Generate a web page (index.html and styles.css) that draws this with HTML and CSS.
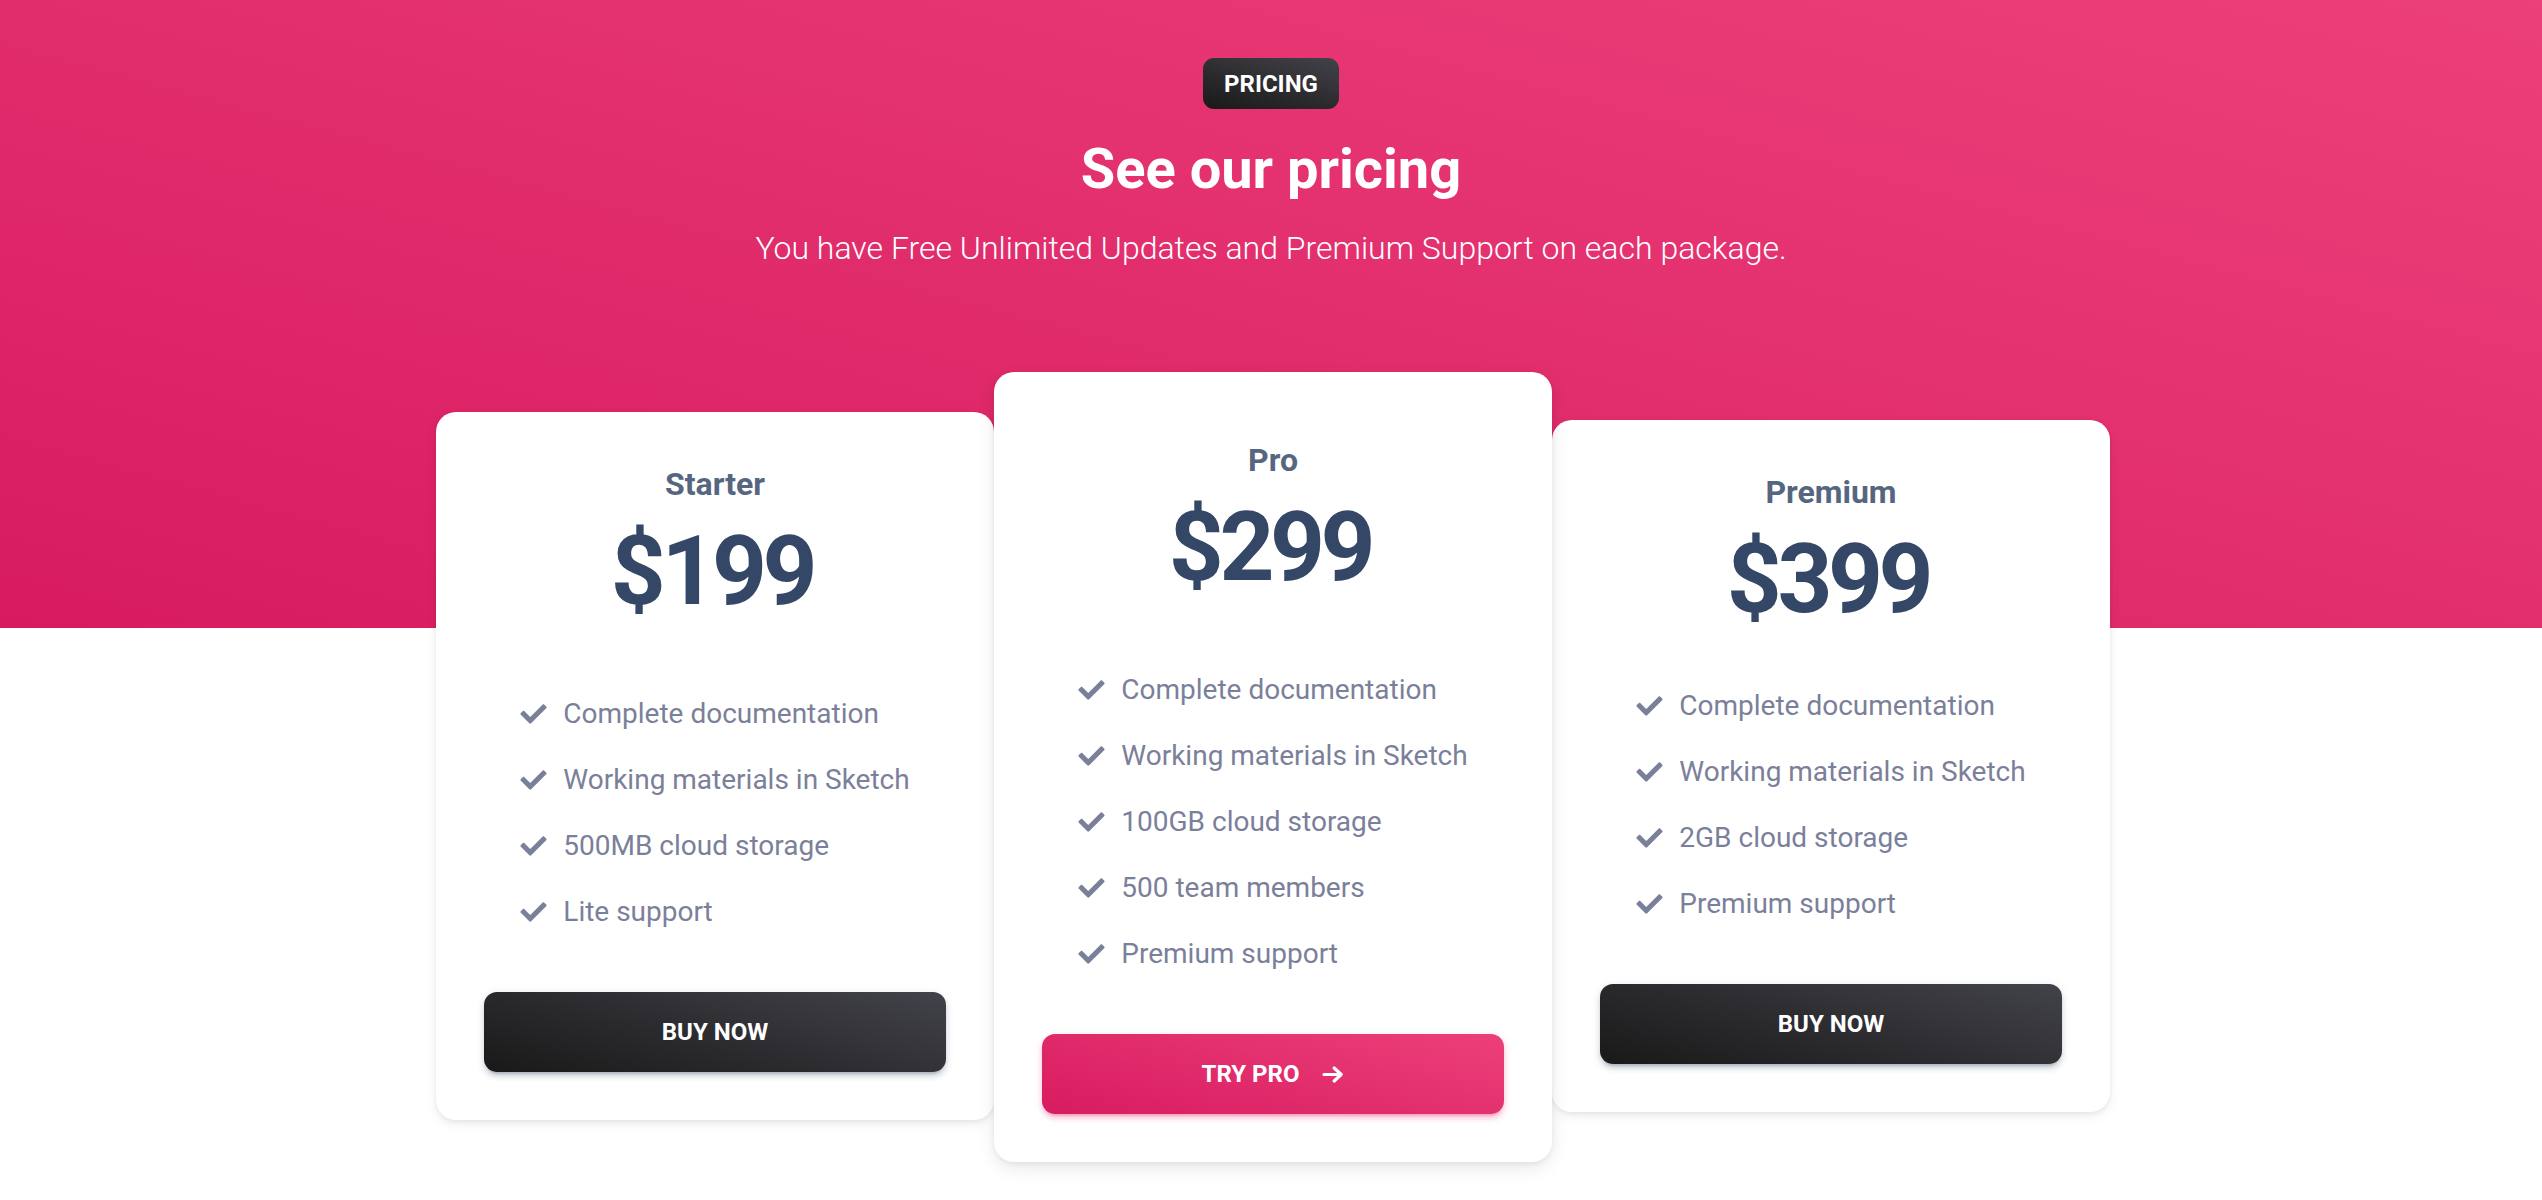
FILE: index.html
```html
<!DOCTYPE html>
<html lang="en">
<head>
<meta charset="utf-8">
<title>Pricing</title>
<link rel="stylesheet" href="styles.css">
</head>
<body>
<section class="pricing">
  <header class="pricing-head">
    <span class="badge">Pricing</span>
    <h2 class="title">See our pricing</h2>
    <p class="lead">You have Free Unlimited Updates and Premium Support on each package.</p>
  </header>

  <div class="plans">
    <article class="plan plan-starter">
      <h3 class="plan-name">Starter</h3>
      <div class="plan-price">$199</div>
      <ul class="features">
        <li><svg class="check" viewBox="0 60 512 392"><path d="M173.898 439.404l-166.4-166.4c-9.997-9.997-9.997-26.206 0-36.204l36.203-36.204c9.997-9.998 26.207-9.998 36.204 0L192 312.69 432.095 72.596c9.997-9.997 26.207-9.997 36.204 0l36.203 36.204c9.997 9.997 9.997 26.206 0 36.204l-294.4 294.401c-9.998 9.997-26.207 9.997-36.204-.001z"/></svg><span>Complete documentation</span></li>
        <li><svg class="check" viewBox="0 60 512 392"><path d="M173.898 439.404l-166.4-166.4c-9.997-9.997-9.997-26.206 0-36.204l36.203-36.204c9.997-9.998 26.207-9.998 36.204 0L192 312.69 432.095 72.596c9.997-9.997 26.207-9.997 36.204 0l36.203 36.204c9.997 9.997 9.997 26.206 0 36.204l-294.4 294.401c-9.998 9.997-26.207 9.997-36.204-.001z"/></svg><span>Working materials in Sketch</span></li>
        <li><svg class="check" viewBox="0 60 512 392"><path d="M173.898 439.404l-166.4-166.4c-9.997-9.997-9.997-26.206 0-36.204l36.203-36.204c9.997-9.998 26.207-9.998 36.204 0L192 312.69 432.095 72.596c9.997-9.997 26.207-9.997 36.204 0l36.203 36.204c9.997 9.997 9.997 26.206 0 36.204l-294.4 294.401c-9.998 9.997-26.207 9.997-36.204-.001z"/></svg><span>500MB cloud storage</span></li>
        <li><svg class="check" viewBox="0 60 512 392"><path d="M173.898 439.404l-166.4-166.4c-9.997-9.997-9.997-26.206 0-36.204l36.203-36.204c9.997-9.998 26.207-9.998 36.204 0L192 312.69 432.095 72.596c9.997-9.997 26.207-9.997 36.204 0l36.203 36.204c9.997 9.997 9.997 26.206 0 36.204l-294.4 294.401c-9.998 9.997-26.207 9.997-36.204-.001z"/></svg><span>Lite support</span></li>
      </ul>
      <a class="btn btn-dark" href="#">Buy now</a>
    </article>

    <article class="plan plan-pro">
      <h3 class="plan-name">Pro</h3>
      <div class="plan-price">$299</div>
      <ul class="features">
        <li><svg class="check" viewBox="0 60 512 392"><path d="M173.898 439.404l-166.4-166.4c-9.997-9.997-9.997-26.206 0-36.204l36.203-36.204c9.997-9.998 26.207-9.998 36.204 0L192 312.69 432.095 72.596c9.997-9.997 26.207-9.997 36.204 0l36.203 36.204c9.997 9.997 9.997 26.206 0 36.204l-294.4 294.401c-9.998 9.997-26.207 9.997-36.204-.001z"/></svg><span>Complete documentation</span></li>
        <li><svg class="check" viewBox="0 60 512 392"><path d="M173.898 439.404l-166.4-166.4c-9.997-9.997-9.997-26.206 0-36.204l36.203-36.204c9.997-9.998 26.207-9.998 36.204 0L192 312.69 432.095 72.596c9.997-9.997 26.207-9.997 36.204 0l36.203 36.204c9.997 9.997 9.997 26.206 0 36.204l-294.4 294.401c-9.998 9.997-26.207 9.997-36.204-.001z"/></svg><span>Working materials in Sketch</span></li>
        <li><svg class="check" viewBox="0 60 512 392"><path d="M173.898 439.404l-166.4-166.4c-9.997-9.997-9.997-26.206 0-36.204l36.203-36.204c9.997-9.998 26.207-9.998 36.204 0L192 312.69 432.095 72.596c9.997-9.997 26.207-9.997 36.204 0l36.203 36.204c9.997 9.997 9.997 26.206 0 36.204l-294.4 294.401c-9.998 9.997-26.207 9.997-36.204-.001z"/></svg><span>100GB cloud storage</span></li>
        <li><svg class="check" viewBox="0 60 512 392"><path d="M173.898 439.404l-166.4-166.4c-9.997-9.997-9.997-26.206 0-36.204l36.203-36.204c9.997-9.998 26.207-9.998 36.204 0L192 312.69 432.095 72.596c9.997-9.997 26.207-9.997 36.204 0l36.203 36.204c9.997 9.997 9.997 26.206 0 36.204l-294.4 294.401c-9.998 9.997-26.207 9.997-36.204-.001z"/></svg><span>500 team members</span></li>
        <li><svg class="check" viewBox="0 60 512 392"><path d="M173.898 439.404l-166.4-166.4c-9.997-9.997-9.997-26.206 0-36.204l36.203-36.204c9.997-9.998 26.207-9.998 36.204 0L192 312.69 432.095 72.596c9.997-9.997 26.207-9.997 36.204 0l36.203 36.204c9.997 9.997 9.997 26.206 0 36.204l-294.4 294.401c-9.998 9.997-26.207 9.997-36.204-.001z"/></svg><span>Premium support</span></li>
      </ul>
      <a class="btn btn-primary" href="#">Try pro<svg class="arrow" viewBox="0 0 22 17"><path d="M2 8.5H19.2M12.2 2l7 6.5-7 6.5"/></svg></a>
    </article>

    <article class="plan plan-premium">
      <h3 class="plan-name">Premium</h3>
      <div class="plan-price">$399</div>
      <ul class="features">
        <li><svg class="check" viewBox="0 60 512 392"><path d="M173.898 439.404l-166.4-166.4c-9.997-9.997-9.997-26.206 0-36.204l36.203-36.204c9.997-9.998 26.207-9.998 36.204 0L192 312.69 432.095 72.596c9.997-9.997 26.207-9.997 36.204 0l36.203 36.204c9.997 9.997 9.997 26.206 0 36.204l-294.4 294.401c-9.998 9.997-26.207 9.997-36.204-.001z"/></svg><span>Complete documentation</span></li>
        <li><svg class="check" viewBox="0 60 512 392"><path d="M173.898 439.404l-166.4-166.4c-9.997-9.997-9.997-26.206 0-36.204l36.203-36.204c9.997-9.998 26.207-9.998 36.204 0L192 312.69 432.095 72.596c9.997-9.997 26.207-9.997 36.204 0l36.203 36.204c9.997 9.997 9.997 26.206 0 36.204l-294.4 294.401c-9.998 9.997-26.207 9.997-36.204-.001z"/></svg><span>Working materials in Sketch</span></li>
        <li><svg class="check" viewBox="0 60 512 392"><path d="M173.898 439.404l-166.4-166.4c-9.997-9.997-9.997-26.206 0-36.204l36.203-36.204c9.997-9.998 26.207-9.998 36.204 0L192 312.69 432.095 72.596c9.997-9.997 26.207-9.997 36.204 0l36.203 36.204c9.997 9.997 9.997 26.206 0 36.204l-294.4 294.401c-9.998 9.997-26.207 9.997-36.204-.001z"/></svg><span>2GB cloud storage</span></li>
        <li><svg class="check" viewBox="0 60 512 392"><path d="M173.898 439.404l-166.4-166.4c-9.997-9.997-9.997-26.206 0-36.204l36.203-36.204c9.997-9.998 26.207-9.998 36.204 0L192 312.69 432.095 72.596c9.997-9.997 26.207-9.997 36.204 0l36.203 36.204c9.997 9.997 9.997 26.206 0 36.204l-294.4 294.401c-9.998 9.997-26.207 9.997-36.204-.001z"/></svg><span>Premium support</span></li>
      </ul>
      <a class="btn btn-dark" href="#">Buy now</a>
    </article>
  </div>
</section>
</body>
</html>
```

FILE: styles.css
```css
* {
  box-sizing: border-box;
}

html,
body {
  margin: 0;
  padding: 0;
}

body {
  font-family: Roboto, "Noto Sans", "Liberation Sans", sans-serif;
  background: #ffffff;
  overflow: hidden;
}

.pricing {
  min-height: 1200px;
  padding-top: 58px;
  background: linear-gradient(195deg, #ec407a 0%, #d81b60 100%) no-repeat left top / 100% 628px;
}

.pricing-head {
  display: flex;
  flex-direction: column;
  align-items: center;
  text-align: center;
  color: #ffffff;
}

.badge {
  display: block;
  padding: 13.5px 21px;
  font-size: 24px;
  font-weight: 700;
  line-height: 24px;
  text-transform: uppercase;
  color: #ffffff;
  border-radius: 11px;
  background: linear-gradient(195deg, #42424a 0%, #191919 100%);
}

.title {
  margin: 27px 0 0;
  font-size: 56px;
  font-weight: 700;
  line-height: 1.2;
  color: #ffffff;
}

.lead {
  margin: 21px 0 0;
  font-size: 32px;
  font-weight: 300;
  line-height: 48px;
  color: #ffffff;
}

.plans {
  display: grid;
  grid-template-columns: repeat(3, 558px);
  align-items: start;
  width: 1678px;
  padding-left: 4px;
  margin: 100px auto 0;
}

.plan {
  display: flex;
  flex-direction: column;
  align-items: center;
  padding: 48px;
  text-align: center;
  background: #ffffff;
  border-radius: 20px;
  box-shadow: 0 4px 12px rgba(0, 0, 0, 0.07), 0 2px 4px rgba(0, 0, 0, 0.05);
}

.plan-starter {
  margin-top: 40px;
}

.plan-pro {
  position: relative;
  z-index: 2;
  padding-top: 64px;
  box-shadow: 0 6px 18px rgba(0, 0, 0, 0.09), 0 2px 5px rgba(0, 0, 0, 0.06);
}

.plan-premium {
  margin-top: 48px;
}

.plan-name {
  margin: 0;
  font-size: 32px;
  font-weight: 700;
  line-height: 48px;
  color: #56667f;
}

.plan-price {
  margin: 6px 0 52px;
  padding-right: 6px;
  font-size: 96px;
  font-weight: 700;
  line-height: 1.2;
  letter-spacing: -4.5px;
  color: #344767;
}

.plan-premium .plan-price {
  margin-bottom: 36px;
}

.features {
  list-style: none;
  margin: 0;
  padding: 0;
  text-align: left;
}

.features li {
  display: flex;
  align-items: center;
  gap: 16px;
  padding: 12px 0;
  font-size: 28px;
  line-height: 42px;
  color: #7b809a;
}

.check {
  flex: none;
  width: 27px;
  height: 20px;
  fill: #7b809a;
}

.btn {
  align-self: stretch;
  display: flex;
  align-items: center;
  justify-content: center;
  gap: 23px;
  height: 80px;
  margin-top: 47px;
  font-size: 24px;
  font-weight: 700;
  text-transform: uppercase;
  text-decoration: none;
  color: #ffffff;
  border-radius: 13px;
}

.btn-dark {
  background: linear-gradient(195deg, #42424a 0%, #191919 100%);
  box-shadow: 0 5px 5px rgba(52, 71, 103, 0.15), 0 5px 2px -3px rgba(52, 71, 103, 0.2), 0 2px 8px rgba(52, 71, 103, 0.15);
}

.btn-primary {
  background: linear-gradient(195deg, #ec407a 0%, #d81b60 100%);
  box-shadow: 0 5px 5px rgba(233, 30, 99, 0.15), 0 5px 2px -3px rgba(233, 30, 99, 0.2), 0 2px 8px rgba(233, 30, 99, 0.15);
}

.arrow {
  width: 22px;
  height: 17px;
  fill: none;
  stroke: #ffffff;
  stroke-width: 3.2;
  stroke-linecap: round;
  stroke-linejoin: round;
}
```
